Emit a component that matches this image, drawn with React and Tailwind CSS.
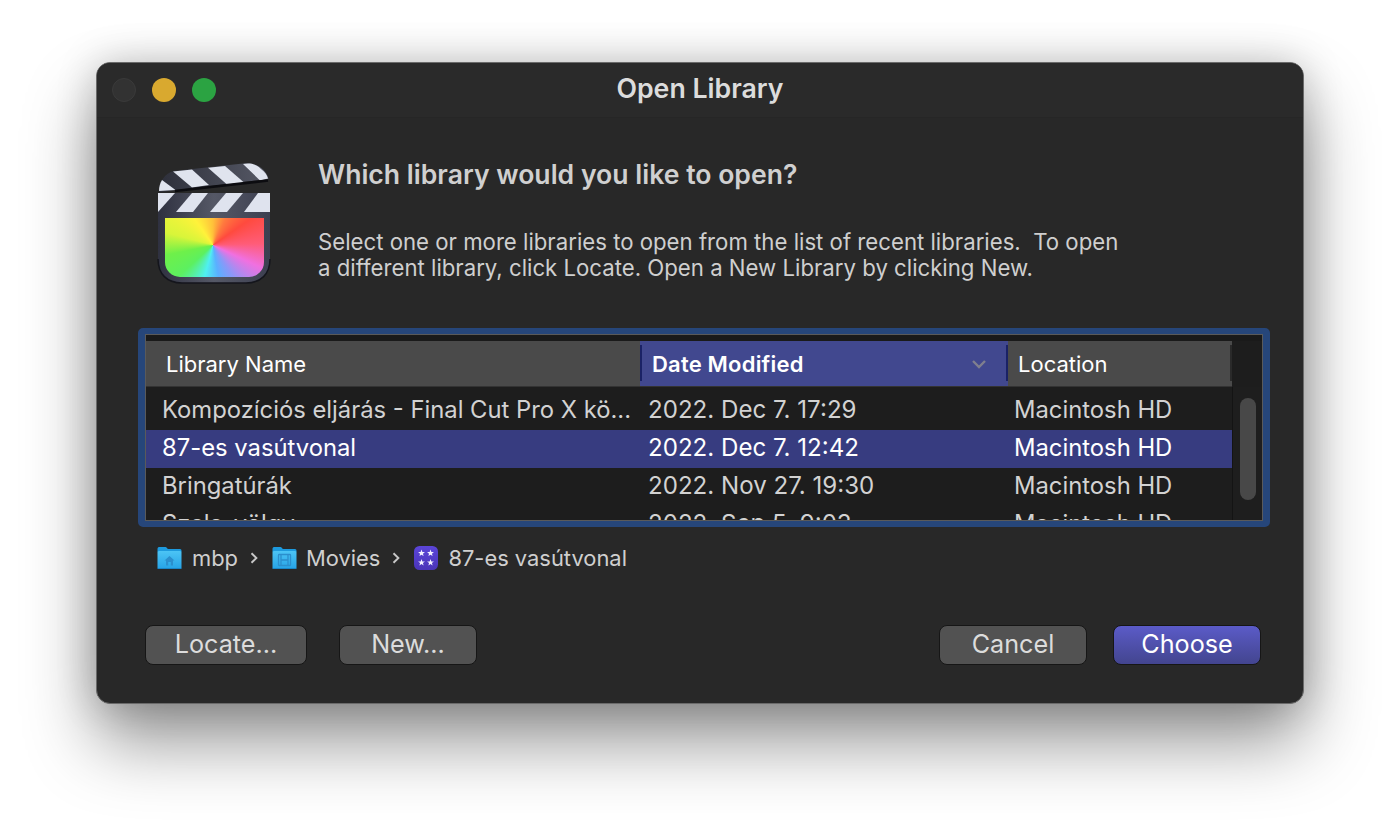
const FONT = "font-['Inter','Noto_Sans',sans-serif]";

function Clapper() {
  return (
    <div className="relative w-[116px] h-[124px] shrink-0">
      <svg width="116" height="124" viewBox="0 0 116 124" className="absolute inset-0">
        <defs>
          <linearGradient id="body" x1="0" y1="0" x2="1" y2="0">
            <stop offset="0" stopColor="#2f3140" />
            <stop offset="0.5" stopColor="#555866" />
            <stop offset="1" stopColor="#3c3f50" />
          </linearGradient>
          <linearGradient id="arm" x1="0" y1="0" x2="1" y2="0">
            <stop offset="0" stopColor="#2d2f3a" />
            <stop offset="1" stopColor="#565966" />
          </linearGradient>
        </defs>
        <path d="M3 30 C3 21 9 12 18 10 L87 2.5 C100 1 110 8 112.5 18 L4 31 Z" fill="url(#arm)" />
        <path d="M3 30 C3 26 4 22 6 19 L19.5 29 Z" fill="#e0e4ee" />
        <path d="M17 10.5 L36 8.5 L53 24 L36 26.5 Z" fill="#e0e4ee" />
        <path d="M52 6.7 L69 5 L88 21.5 L71 23.5 Z" fill="#e0e4ee" />
        <path d="M87 3 C92 2 100 2 105 8 C109 11 111 14 112 17.5 L104 19.5 Z" fill="#e0e4ee" />
        <path d="M19 30 L112 19.5" stroke="#0c0c10" strokeWidth="2.6" fill="none" />
        <path d="M2 32 H114 V98 C114 113 105 122 90 122 H26 C11 122 2 113 2 98 Z" fill="url(#body)" />
        <path d="M2 32 L19 32 L2 51 Z" fill="#dfe3ee" />
        <path d="M20 51 L36 32 L52 32 L37 51 Z" fill="#dfe3ee" />
        <path d="M54 51 L70 32 L87 32 L71 51 Z" fill="#dfe3ee" />
        <path d="M88 51 L102 32 L114 32 L114 51 Z" fill="#dfe3ee" />
        <path d="M2 98 C2 113 11 122 26 122 H90 C105 122 114 113 114 98" stroke="#14151c" strokeWidth="1.5" fill="none" />
      </svg>
      <div className="absolute left-[9px] top-[57px] w-[99px] h-[59px] rounded-b-[15px] bg-[conic-gradient(from_0deg_at_48.5%_46%,#ffc03a_0deg,#ff7a3e_25deg,#ff4a3e_55deg,#ff5c78_88deg,#f070e0_115deg,#8a98f8_148deg,#5ab0ff_170deg,#4ff0f0_195deg,#5cf060_228deg,#6ef04a_258deg,#d8f53a_285deg,#fff23a_325deg,#ffc03a_360deg)]" />
    </div>
  );
}

function Folder({ kind }) {
  return (
    <svg width="25" height="24" viewBox="0 0 25 24" className="shrink-0">
      <defs>
        <linearGradient id={"f" + kind} x1="0" y1="0" x2="0" y2="1">
          <stop offset="0" stopColor="#4cc4f5" />
          <stop offset="1" stopColor="#26a3e6" />
        </linearGradient>
      </defs>
      <path d="M0.5 6 V3 C0.5 1.6 1.4 1 2.5 1 H8.5 C9.8 1 10 3 11.5 3 H23 C24 3 24.5 3.8 24.5 5 V6 Z" fill="#1d9ade" />
      <rect x="0.5" y="5" width="24" height="18" rx="1.5" fill={"url(#f" + kind + ")"} />
      <rect x="0.5" y="22" width="24" height="1" rx="0.5" fill="#1a86c8" />
      {kind === "home" ? (
        <path d="M7.5 14.5 L12.5 10 L17.5 14.5 H16 V19.5 H13.8 V16 H11.2 V19.5 H9 V14.5 Z" fill="#2b8fcd" />
      ) : (
        <g fill="none" stroke="#2b8fcd" strokeWidth="1.3">
          <rect x="6.5" y="8.5" width="12" height="11" rx="0.8" />
          <path d="M9 8.5 V19.5 M16 8.5 V19.5 M9 14 H16" />
        </g>
      )}
    </svg>
  );
}

function Star({ x, y }) {
  const pts = [];
  for (let i = 0; i < 10; i++) {
    const r = i % 2 === 0 ? 3.6 : 1.5;
    const a = -Math.PI / 2 + (i * Math.PI) / 5;
    pts.push((x + r * Math.cos(a)).toFixed(2) + "," + (y + r * Math.sin(a)).toFixed(2));
  }
  return <polygon points={pts.join(" ")} fill="#f2f0ff" />;
}

function LibIcon() {
  return (
    <svg width="24" height="24" viewBox="0 0 24 24" className="shrink-0">
      <defs>
        <linearGradient id="lib" x1="0" y1="0" x2="0" y2="1">
          <stop offset="0" stopColor="#5b45d8" />
          <stop offset="1" stopColor="#4a34b8" />
        </linearGradient>
      </defs>
      <rect x="0" y="0" width="24" height="24" rx="5.5" fill="url(#lib)" />
      <Star x={7.5} y={7.2} />
      <Star x={16.5} y={7.2} />
      <Star x={7.5} y={16.6} />
      <Star x={16.5} y={16.6} />
    </svg>
  );
}

function Chevron() {
  return (
    <svg width="8" height="12" viewBox="0 0 8 12" className="shrink-0 block">
      <path d="M1.5 1.2 L6.4 6 L1.5 10.8" stroke="#c8c8c8" strokeWidth="1.9" fill="none" />
    </svg>
  );
}

const rows = [
  ["Kompozíciós eljárás - Final Cut Pro X kö...", "2022. Dec 7. 17:29", "Macintosh HD", false],
  ["87-es vasútvonal", "2022. Dec 7. 12:42", "Macintosh HD", true],
  ["Bringatúrák", "2022. Nov 27. 19:30", "Macintosh HD", false],
  ["Szala-völgy", "2022. Sep 5. 9:03", "Macintosh HD", false],
];

function Row({ r }) {
  return (
    <div className={"flex h-[38px] items-center pb-[2px] text-[23.8px] " + (r[3] ? "bg-[#373c80] text-white" : "text-[#d2d2d2]")}>
      <div className="w-[494px] pl-[16px] whitespace-nowrap overflow-hidden">{r[0]}</div>
      <div className="w-[366px] pl-[8px] whitespace-nowrap text-[24.1px]">{r[1]}</div>
      <div className="w-[226px] pl-[8px] whitespace-nowrap">{r[2]}</div>
    </div>
  );
}

function Btn({ children, w, primary }) {
  return (
    <button
      className={
        "h-[40px] rounded-[8px] border border-[#161616] text-[25.2px] leading-none " + w + " " +
        (primary
          ? "bg-gradient-to-b from-[#5b5bc8] to-[#43458f] text-white"
          : "bg-[#525252] text-[#dcdcdc]")
      }
    >
      {children}
    </button>
  );
}

export default function App() {
  return (
    <div className={"h-[838px] w-[1400px] bg-white pt-[62px] pl-[96px] overflow-hidden " + FONT}>
      <div className="w-[1208px] h-[642px] rounded-[14px] bg-[#282828] border border-[#6a6a6a] shadow-[0_38px_70px_rgba(0,0,0,0.42),0_0_40px_rgba(0,0,0,0.2)] flex flex-col overflow-hidden">
        <div className="relative h-[55px] shrink-0 border-b border-[#262626] bg-[#2a2a2a] flex items-center justify-center pb-[3px]">
          <div className="absolute left-[15px] top-[15px] flex gap-[16px]">
            <span className="w-[24px] h-[24px] rounded-full bg-[#323232] border border-[#3a3a3a]" />
            <span className="w-[24px] h-[24px] rounded-full bg-[#d9a92f]" />
            <span className="w-[24px] h-[24px] rounded-full bg-[#2ba342]" />
          </div>
          <div className="text-[26.7px] font-semibold text-[#dcdcdc]">Open Library</div>
        </div>

        <div className="flex pl-[59px] pt-[43px] h-[210px] shrink-0">
          <Clapper />
          <div className="ml-[46px]">
            <div className="text-[26.6px] font-semibold text-[#d0d0d0] leading-[30px] mt-[-2px]">Which library would you like to open?</div>
            <div className="mt-[40px] text-[22.2px] leading-[26px] text-[#cfcfcf] whitespace-pre">
              {"Select one or more libraries to open from the list of recent libraries.  To open\na different library, click Locate. Open a New Library by clicking New."}
            </div>
          </div>
        </div>

        <div className="ml-[41px] w-[1132px] h-[199px] shrink-0 rounded-[5px] border-x-[7px] border-y-[6px] border-[#26467a] bg-[#1d1d1d] flex flex-col overflow-hidden relative">
          <div className="absolute inset-0 border border-[#5a5a5a] pointer-events-none z-10" />
          <div className="h-[7px] shrink-0 bg-[#1a1a1a]" />
          <div className="flex shrink-0 ml-[1px]">
            <div className="flex w-[1086px] h-[46px] text-[22px] text-white border-b border-[#333333]">
              <div className="w-[494px] bg-[#4a4a4a] pl-[20px] pt-[1px] flex items-center">Library Name</div>
              <div className="w-[368px] bg-[#41488f] pl-[12px] pt-[1px] flex items-center font-semibold tracking-[0.2px] relative">
                <span className="absolute left-0 top-[4px] w-[2px] h-[36px] bg-[#1a2266]" />
                Date Modified
                <svg width="16" height="10" viewBox="0 0 16 10" className="absolute right-[21px] top-[18px]">
                  <path d="M2 2 L8 8 L14 2" stroke="#7f7f8e" strokeWidth="2.4" fill="none" />
                </svg>
                <span className="absolute right-0 top-[4px] w-[2px] h-[36px] bg-[#1a2266]" />
              </div>
              <div className="w-[224px] bg-[#4a4a4a] pl-[10px] pt-[1px] flex items-center relative">
                Location
                <span className="absolute right-0 top-[4px] w-[2px] h-[36px] bg-[#2a2a2a]" />
              </div>
            </div>
          </div>
          <div className="flex ml-[1px] flex-1 min-h-0">
            <div className="w-[1086px] pt-[5px] overflow-hidden shrink-0">
              {rows.map((r) => <Row key={r[0]} r={r} />)}
            </div>
            <div className="flex-1 bg-[#1e1e1e] pl-[7px] pt-[11px] border-l border-[#141414]">
              <div className="w-[16px] h-[102px] rounded-full bg-[#484848]" />
            </div>
          </div>
        </div>

        <div className="flex items-center ml-[60px] mt-[19px] h-[24px] text-[21.9px] text-[#cfcfcf] whitespace-nowrap">
          <Folder kind="home" />
          <span className="ml-[10px]">mbp</span>
          <span className="ml-[12px]"><Chevron /></span>
          <span className="ml-[14px]"><Folder kind="movie" /></span>
          <span className="ml-[9px]">Movies</span>
          <span className="ml-[12px]"><Chevron /></span>
          <span className="ml-[14px]"><LibIcon /></span>
          <span className="ml-[10px]">87-es vasútvonal</span>
        </div>

        <div className="flex items-center ml-[48px] w-[1116px] mt-[55px]">
          <Btn w="w-[162px]">Locate...</Btn>
          <div className="ml-[32px]"><Btn w="w-[138px]">New...</Btn></div>
          <div className="ml-auto"><Btn w="w-[148px]">Cancel</Btn></div>
          <div className="ml-[26px]"><Btn w="w-[148px]" primary>Choose</Btn></div>
        </div>
      </div>
    </div>
  );
}
